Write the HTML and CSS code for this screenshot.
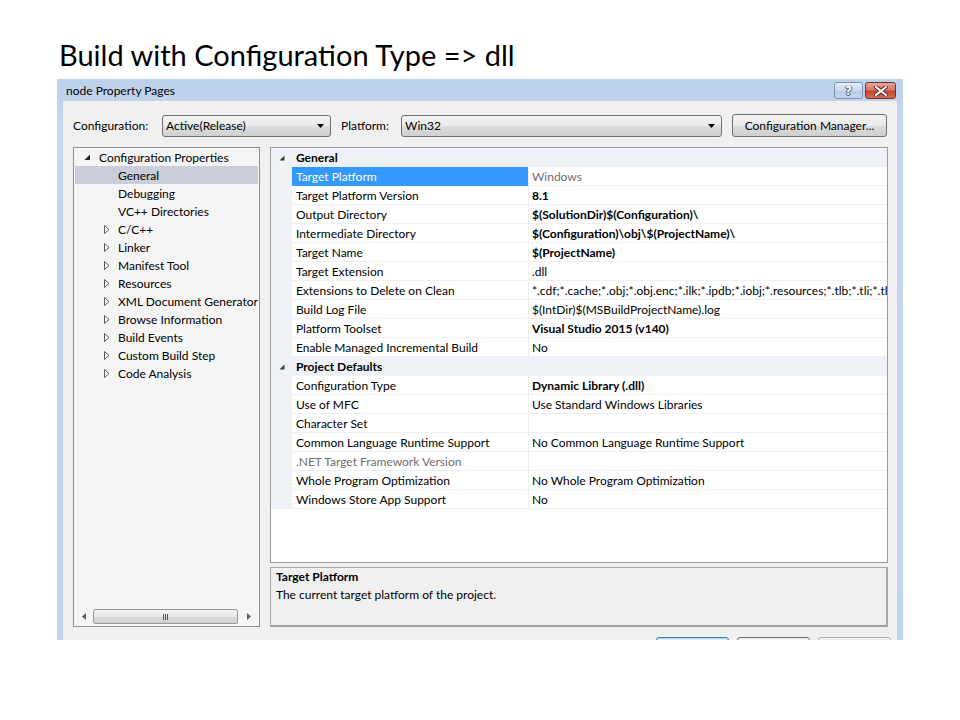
FILE: index.html
```html
<!DOCTYPE html>
<html>
<head>
<meta charset="utf-8">
<title>node Property Pages</title>
<link rel="stylesheet" href="styles.css">
</head>
<body>
<h1 class="slide-title">Build with Configuration Type =&gt; dll</h1>
<div class="dialog">
  <div class="titlebar">
    <span class="title-text">node Property Pages</span>
    <div class="caption-buttons">
      <span class="cap-btn help">?</span>
      <span class="cap-btn close">
        <svg width="14" height="10" viewBox="0 0 14 10"><path d="M2 1 L12 9 M12 1 L2 9" stroke="#5a2a2a" stroke-width="4" stroke-linecap="square"/><path d="M2 1 L12 9 M12 1 L2 9" stroke="#fff" stroke-width="2" stroke-linecap="square"/></svg>
      </span>
    </div>
  </div>
  <div class="client">
    <div class="config-row">
      <span class="lbl lbl-config">Configuration:</span>
      <div class="combo combo-config"><span>Active(Release)</span><svg class="drop" width="7" height="4" viewBox="0 0 7 4"><path d="M0 0 H7 L3.5 4 Z" fill="#000"/></svg></div>
      <span class="lbl lbl-platform">Platform:</span>
      <div class="combo combo-platform"><span>Win32</span><svg class="drop" width="7" height="4" viewBox="0 0 7 4"><path d="M0 0 H7 L3.5 4 Z" fill="#000"/></svg></div>
      <span class="btn cfg-mgr">Configuration Manager...</span>
    </div>
    <div class="panes">
      <div class="tree">
        <ul class="tree-list">
          <li class="node lvl0"><span class="tw"><svg width="7" height="7" viewBox="0 0 7 7"><path d="M6 0.5 V6 H0.5 Z" fill="#262626"/></svg></span>Configuration Properties</li>
          <li class="node lvl1 selected"><span class="tw"></span>General</li>
          <li class="node lvl1"><span class="tw"></span>Debugging</li>
          <li class="node lvl1"><span class="tw"></span>VC++ Directories</li>
          <li class="node lvl1"><span class="tw"><svg class="col" width="6" height="9" viewBox="0 0 6 9"><path d="M0.5 0.5 L5 4.5 L0.5 8.5 Z" fill="#fff" stroke="#595959"/></svg></span>C/C++</li>
          <li class="node lvl1"><span class="tw"><svg class="col" width="6" height="9" viewBox="0 0 6 9"><path d="M0.5 0.5 L5 4.5 L0.5 8.5 Z" fill="#fff" stroke="#595959"/></svg></span>Linker</li>
          <li class="node lvl1"><span class="tw"><svg class="col" width="6" height="9" viewBox="0 0 6 9"><path d="M0.5 0.5 L5 4.5 L0.5 8.5 Z" fill="#fff" stroke="#595959"/></svg></span>Manifest Tool</li>
          <li class="node lvl1"><span class="tw"><svg class="col" width="6" height="9" viewBox="0 0 6 9"><path d="M0.5 0.5 L5 4.5 L0.5 8.5 Z" fill="#fff" stroke="#595959"/></svg></span>Resources</li>
          <li class="node lvl1"><span class="tw"><svg class="col" width="6" height="9" viewBox="0 0 6 9"><path d="M0.5 0.5 L5 4.5 L0.5 8.5 Z" fill="#fff" stroke="#595959"/></svg></span>XML Document Generator</li>
          <li class="node lvl1"><span class="tw"><svg class="col" width="6" height="9" viewBox="0 0 6 9"><path d="M0.5 0.5 L5 4.5 L0.5 8.5 Z" fill="#fff" stroke="#595959"/></svg></span>Browse Information</li>
          <li class="node lvl1"><span class="tw"><svg class="col" width="6" height="9" viewBox="0 0 6 9"><path d="M0.5 0.5 L5 4.5 L0.5 8.5 Z" fill="#fff" stroke="#595959"/></svg></span>Build Events</li>
          <li class="node lvl1"><span class="tw"><svg class="col" width="6" height="9" viewBox="0 0 6 9"><path d="M0.5 0.5 L5 4.5 L0.5 8.5 Z" fill="#fff" stroke="#595959"/></svg></span>Custom Build Step</li>
          <li class="node lvl1"><span class="tw"><svg class="col" width="6" height="9" viewBox="0 0 6 9"><path d="M0.5 0.5 L5 4.5 L0.5 8.5 Z" fill="#fff" stroke="#595959"/></svg></span>Code Analysis</li>
        </ul>
        <div class="hscroll">
          <span class="sb-arrow"><svg width="4" height="7" viewBox="0 0 4 7"><path d="M4 0 V7 L0 3.5 Z" fill="#606060"/></svg></span>
          <span class="sb-track"><span class="sb-thumb"><span class="grip"></span><span class="grip"></span><span class="grip"></span></span></span>
          <span class="sb-arrow"><svg width="4" height="7" viewBox="0 0 4 7"><path d="M0 0 V7 L4 3.5 Z" fill="#606060"/></svg></span>
        </div>
      </div>
      <div class="right">
        <div class="grid">
          <div class="cat"><span class="gut"><svg width="6" height="6" viewBox="0 0 6 6"><path d="M5.5 0.5 V5.5 H0.5 Z" fill="#3c3c3c"/></svg></span><span class="cat-name">General</span></div>
          <div class="row selected"><span class="gut"></span><span class="name">Target Platform</span><span class="val dim">Windows</span></div>
          <div class="row"><span class="gut"></span><span class="name">Target Platform Version</span><span class="val b">8.1</span></div>
          <div class="row"><span class="gut"></span><span class="name">Output Directory</span><span class="val b">$(SolutionDir)$(Configuration)\</span></div>
          <div class="row"><span class="gut"></span><span class="name">Intermediate Directory</span><span class="val b">$(Configuration)\obj\$(ProjectName)\</span></div>
          <div class="row"><span class="gut"></span><span class="name">Target Name</span><span class="val b">$(ProjectName)</span></div>
          <div class="row"><span class="gut"></span><span class="name">Target Extension</span><span class="val">.dll</span></div>
          <div class="row"><span class="gut"></span><span class="name">Extensions to Delete on Clean</span><span class="val">*.cdf;*.cache;*.obj;*.obj.enc;*.ilk;*.ipdb;*.iobj;*.resources;*.tlb;*.tli;*.tlh;*.tmp;*.rsp</span></div>
          <div class="row"><span class="gut"></span><span class="name">Build Log File</span><span class="val">$(IntDir)$(MSBuildProjectName).log</span></div>
          <div class="row"><span class="gut"></span><span class="name">Platform Toolset</span><span class="val b">Visual Studio 2015 (v140)</span></div>
          <div class="row"><span class="gut"></span><span class="name">Enable Managed Incremental Build</span><span class="val">No</span></div>
          <div class="cat"><span class="gut"><svg width="6" height="6" viewBox="0 0 6 6"><path d="M5.5 0.5 V5.5 H0.5 Z" fill="#3c3c3c"/></svg></span><span class="cat-name">Project Defaults</span></div>
          <div class="row"><span class="gut"></span><span class="name">Configuration Type</span><span class="val b">Dynamic Library (.dll)</span></div>
          <div class="row"><span class="gut"></span><span class="name">Use of MFC</span><span class="val">Use Standard Windows Libraries</span></div>
          <div class="row"><span class="gut"></span><span class="name">Character Set</span><span class="val"></span></div>
          <div class="row"><span class="gut"></span><span class="name">Common Language Runtime Support</span><span class="val">No Common Language Runtime Support</span></div>
          <div class="row"><span class="gut"></span><span class="name dim">.NET Target Framework Version</span><span class="val"></span></div>
          <div class="row"><span class="gut"></span><span class="name">Whole Program Optimization</span><span class="val">No Whole Program Optimization</span></div>
          <div class="row"><span class="gut"></span><span class="name">Windows Store App Support</span><span class="val">No</span></div>
        </div>
        <div class="desc">
          <div class="desc-title">Target Platform</div>
          <div class="desc-text">The current target platform of the project.</div>
        </div>
      </div>
    </div>
    <div class="buttons-row">
      <span class="btn dlg-btn ok">OK</span>
      <span class="btn dlg-btn">Cancel</span>
      <span class="btn dlg-btn disabled">Apply</span>
    </div>
  </div>
</div>
</body>
</html>
```
FILE: styles.css
```css
* { box-sizing: border-box; }
html, body { margin: 0; padding: 0; background: #fff; }
body { font-family: Lato, "Noto Sans", sans-serif; font-size: 12px; color: #000; }

.slide-title {
  margin: 0;
  height: 79px;
  padding: 37px 0 0 59px;
  font-family: Lato, "Open Sans", sans-serif;
  font-weight: normal;
  font-size: 29px;
  line-height: 36px;
  color: #000;
}

.dialog {
  margin-left: 57px;
  width: 846px;
  height: 561px;
  overflow: hidden;
  background: linear-gradient(to bottom, #bcd1ea 0, #c3d7ee 40px, #bfd5ed 100%);
  display: flex;
  flex-direction: column;
}

.titlebar {
  height: 22px;
  flex: none;
  display: flex;
  align-items: center;
  justify-content: space-between;
  padding-left: 9px;
  padding-right: 7px;
}
.title-text { font-size: 12px; color: #000; padding-top: 1px; }
.caption-buttons { display: flex; gap: 2px; align-self: flex-start; margin-top: 3px; }
.cap-btn {
  display: flex; align-items: center; justify-content: center;
  height: 17px; border-radius: 3px;
}
.cap-btn.help {
  width: 29px;
  border: 1px solid #7a93b4;
  background: linear-gradient(to bottom, #e4edf7 0, #c9d9ec 50%, #b3c9e3 51%, #c6d8ee 100%);
  color: #fff;
  font-family: "DejaVu Sans", sans-serif;
  font-weight: bold;
  font-size: 12px;
  text-shadow: 0 0 1px #2f4f78, 1px 0 0 #4a6688, -1px 0 0 #4a6688, 0 1px 0 #4a6688;
}
.cap-btn.close {
  width: 31px;
  border: 1px solid #6e2f2f;
  background: linear-gradient(to bottom, #e8a597 0, #d87a66 45%, #c74530 55%, #d26c54 100%);
}

.client {
  flex: 1;
  margin: 0 6px;
  background: #f0f0f0;
  padding: 13px 10px 0 10px;
  display: flex;
  flex-direction: column;
}

.config-row {
  display: flex;
  align-items: center;
  height: 23px;
}
.lbl { flex: none; }
.lbl-config { width: 89px; }
.lbl-platform { width: 60px; margin-left: 10px; }
.combo {
  flex: none;
  height: 22px;
  border: 1px solid #707070;
  border-radius: 3px;
  background: linear-gradient(to bottom, #f3f3f3 0, #ebebeb 50%, #dddddd 51%, #d0d0d0 100%);
  display: flex;
  align-items: center;
  justify-content: space-between;
  padding: 0 6px 0 3px;
}
.combo-config { width: 169px; }
.combo-platform { width: 321px; }
.btn {
  display: inline-flex; align-items: center; justify-content: center;
  border: 1px solid #707070;
  border-radius: 3px;
  background: linear-gradient(to bottom, #f2f2f2 0, #ebebeb 50%, #dddddd 51%, #cfcfcf 100%);
}
.cfg-mgr { width: 156px; height: 23px; margin-left: 10px; }

.panes {
  display: flex;
  gap: 10px;
  margin-top: 10px;
  height: 480px;
  flex: none;
}

.tree {
  width: 187px;
  border: 1px solid #8e8f8f;
  background: #f5f5f5;
  display: flex;
  flex-direction: column;
  justify-content: space-between;
}
.tree-list { list-style: none; margin: 0; padding: 0 1px; }
.node {
  height: 18px;
  display: flex;
  align-items: center;
  white-space: nowrap;
  overflow: hidden;
}
.node.lvl0 { padding-left: 9px; }
.node.lvl1 { padding-left: 28px; }
.node.selected { background: #cbcdd9; }
.tw { width: 15px; flex: none; display: flex; align-items: center; }
.tw svg.col { margin-left: 1px; }

.hscroll {
  height: 17px;
  display: flex;
  align-items: center;
  margin: 0 0 1px 0;
  padding: 0 2px;
}
.sb-arrow { width: 16px; display: flex; justify-content: center; }
.sb-track { flex: 1; height: 15px; display: flex; align-items: center; padding: 0 1px; }
.sb-thumb {
  width: 145px;
  height: 15px;
  border: 1px solid #9a9a9a;
  border-radius: 2px;
  background: linear-gradient(to bottom, #f3f3f3 0, #e8e8e8 50%, #d9d9d9 51%, #d2d2d2 100%);
  display: flex;
  justify-content: center;
  align-items: center;
  gap: 1px;
}
.grip { width: 1px; height: 6px; background: #555; }

.right {
  width: 618px;
  display: flex;
  flex-direction: column;
  gap: 4px;
}
.grid {
  height: 416px;
  border: 1px solid #9c9c9c;
  background: #fff;
  overflow: hidden;
  flex: none;
}
.cat, .row {
  height: 19px;
  display: flex;
  align-items: stretch;
  white-space: nowrap;
}
.cat { background: #eff2f7; font-weight: bold; }
.gut {
  width: 21px;
  flex: none;
  background: #eff2f7;
  display: flex;
  align-items: center;
  justify-content: center;
  padding-left: 1px;
}
.cat-name { padding-left: 4px; display: flex; align-items: center; }
.name {
  width: 236px;
  flex: none;
  padding-left: 4px;
  display: flex;
  align-items: center;
  border-bottom: 1px solid #f0f0f0;
  overflow: hidden;
}
.val {
  flex: 1;
  min-width: 0;
  padding-left: 3px;
  display: flex;
  align-items: center;
  border-left: 1px solid #f0f0f0;
  border-bottom: 1px solid #f0f0f0;
  overflow: hidden;
}
.row.selected .name { background: #3399ff; color: #fff; border-bottom-color: #3399ff; }
.dim { color: #6d6d6d; }
.b { font-weight: bold; }

.desc {
  height: 60px;
  border: 1px solid #a8a8a8;
  border-bottom: 2px solid #a0a0a0;
  border-right: 2px solid #a8a8a8;
  background: #f0f0f0;
  padding: 0 5px;
  line-height: 18px;
}
.desc-title { font-weight: bold; }

.buttons-row {
  display: flex;
  justify-content: flex-end;
  gap: 8px;
  margin-top: 10px;
  margin-right: -4px;
}
.dlg-btn { width: 73px; height: 23px; }
.dlg-btn.ok { border-color: #3c7fb1; box-shadow: inset 0 0 0 1px #a6dcf7; }
.dlg-btn.disabled { border-color: #adb2b5; color: #838383; }
```
